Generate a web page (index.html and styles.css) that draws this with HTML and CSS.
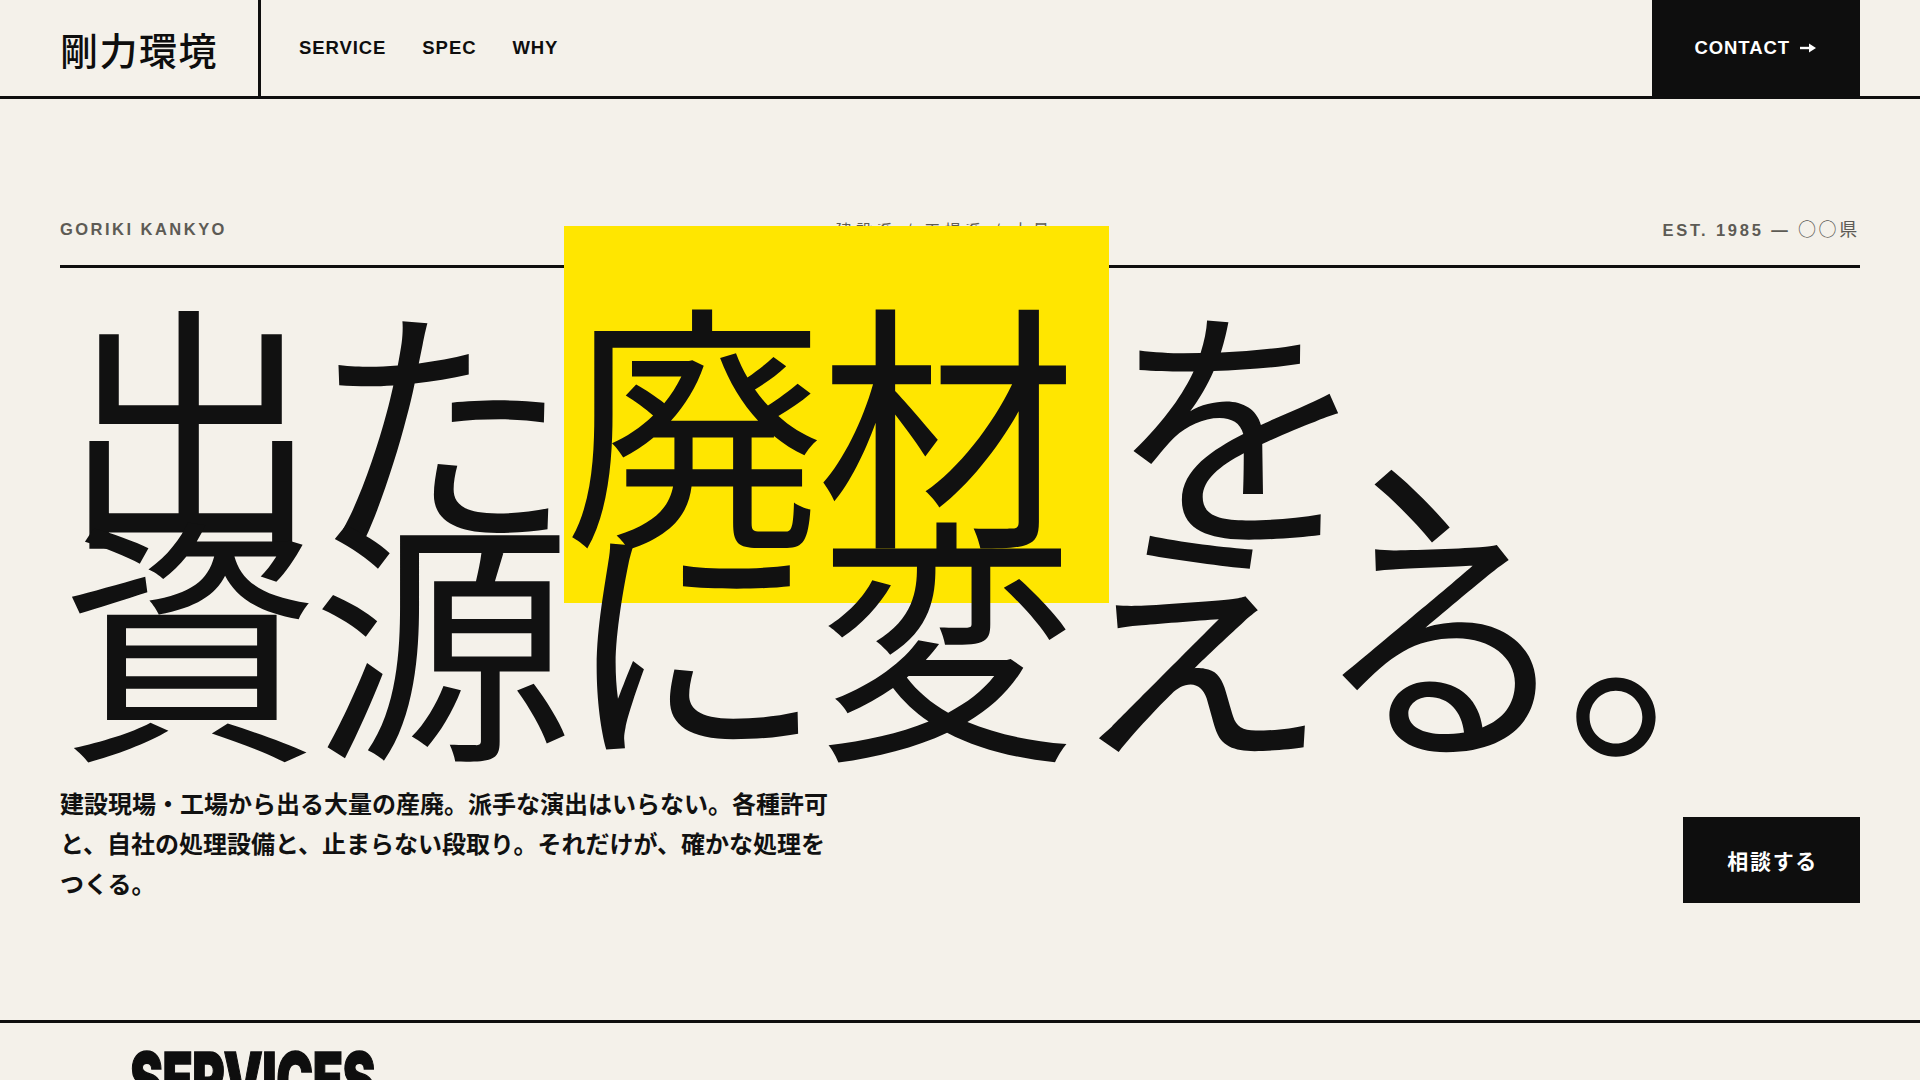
FILE: index.html
```html
<!DOCTYPE html>
<html lang="ja">
<head>
<meta charset="utf-8">
<title>剛力環境</title>
<link rel="stylesheet" href="styles.css">
</head>
<body>
<header class="site-header">
  <div class="logo">剛力環境</div>
  <nav class="nav">
    <a href="#service">SERVICE</a>
    <a href="#spec">SPEC</a>
    <a href="#why">WHY</a>
  </nav>
  <a class="contact" href="#contact">CONTACT<svg class="arrow" width="16" height="12" viewBox="0 0 16 12" aria-hidden="true"><path d="M0 6H11" stroke="#fff" stroke-width="2.4"/><path d="M9 1.5L16 6L9 10.5Z" fill="#fff"/></svg></a>
</header>

<section class="hero">
  <div class="hero-meta">
    <span class="meta-en">GORIKI KANKYO</span>
    <span class="meta-jp">建設系 / 工場系 / 大量</span>
    <span class="meta-en meta-est">EST. 1985 — <span class="meta-cjk">○○県</span></span>
  </div>
  <h1 class="hero-title">出た<span class="mark">廃材</span>を、<br>資源に変える。</h1>
  <div class="hero-foot">
    <p class="lead">建設現場・工場から出る大量の産廃。派手な演出はいらない。各種許可と、自社の処理設備と、止まらない段取り。それだけが、確かな処理をつくる。</p>
    <a class="cta" href="#contact">相談する</a>
  </div>
</section>

<section class="services" id="service">
  <h2 class="section-title">SERVICES</h2>
</section>
</body>
</html>
```

FILE: styles.css
```css
* { box-sizing: border-box; }
html, body { margin: 0; padding: 0; }
body {
  background: #f4f1ea;
  color: #0e0e0e;
  font-family: "Liberation Sans", "Noto Sans CJK JP", sans-serif;
  overflow: hidden;
}
a { color: inherit; text-decoration: none; }

.site-header {
  display: flex;
  align-items: stretch;
  height: 99px;
  padding: 0 60px;
  border-bottom: 3px solid #0e0e0e;
}
.logo {
  width: 201px;
  display: flex;
  align-items: center;
  border-right: 3px solid #0e0e0e;
  font-family: "Noto Sans CJK JP", sans-serif;
  font-size: 38px;
  font-weight: 500;
  letter-spacing: 0.04em;
}
.nav {
  display: flex;
  align-items: center;
  gap: 36px;
  padding-left: 38px;
  flex: 1;
}
.nav a {
  font-size: 18.5px;
  font-weight: 700;
  letter-spacing: 0.05em;
}
.contact {
  display: flex;
  align-items: center;
  gap: 10px;
  background: #0e0e0e;
  color: #fff;
  padding: 0 44px 0 42px;
  font-size: 18.5px;
  font-weight: 700;
  letter-spacing: 0.05em;
}
.arrow { display: block; }

.hero {
  padding: 120px 60px 117px;
  border-bottom: 3px solid #0e0e0e;
}
.hero-meta {
  display: flex;
  justify-content: space-between;
  align-items: center;
  height: 49px;
  padding-bottom: 26px;
  border-bottom: 3px solid #0e0e0e;
  color: #5d5b55;
  line-height: 20px;
}
.meta-en {
  font-size: 16.5px;
  font-weight: 700;
  letter-spacing: 0.15em;
}
.meta-est { letter-spacing: 0.17em; }
.meta-cjk {
  font-family: "Noto Sans CJK JP", sans-serif;
  font-size: 18px;
  font-weight: 400;
  line-height: 1;
  letter-spacing: 0.15em;
}
.meta-jp {
  font-family: "Noto Sans CJK JP", sans-serif;
  font-size: 16px;
  letter-spacing: 0.28em;
}
.hero-title {
  margin: 40px 0 0;
  font-family: "Noto Sans CJK JP", sans-serif;
  font-size: 260px;
  font-weight: 400;
  line-height: 0.82;
  letter-spacing: -0.03em;
  color: #111;
}
.mark {
  background: #ffe600;
  padding-right: 40px;
}
.hero-foot {
  display: flex;
  justify-content: space-between;
  align-items: flex-end;
  margin-top: 49px;
}
.lead {
  margin: 0;
  max-width: 780px;
  font-family: "Noto Sans CJK JP", sans-serif;
  font-size: 24px;
  font-weight: 700;
  line-height: 40px;
  color: #111;
}
.cta {
  display: block;
  background: #0e0e0e;
  color: #fff;
  padding: 30px 42px 30px 44px;
  font-family: "Noto Sans CJK JP", sans-serif;
  font-size: 21px;
  font-weight: 700;
  line-height: 26px;
  letter-spacing: 0.08em;
}

.services {
  padding: 18px 130px 0;
}
.section-title {
  margin: 0;
  font-family: "Inter", sans-serif;
  font-size: 76px;
  font-weight: 900;
  line-height: 1;
  letter-spacing: -0.01em;
  transform: scaleX(0.65);
  transform-origin: left top;
  -webkit-text-stroke: 1.5px #0e0e0e;
}
```
